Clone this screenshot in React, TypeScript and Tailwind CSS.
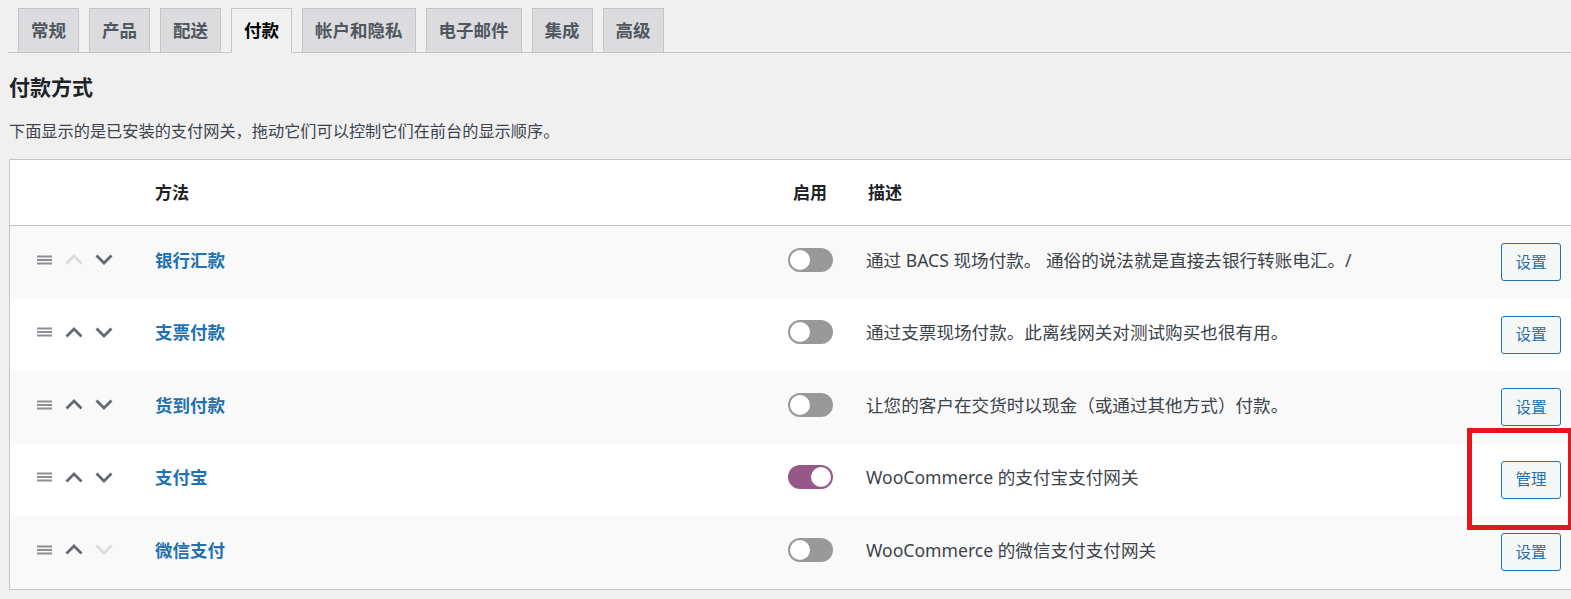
import React from 'react';

type Gateway = {
  name: string;
  desc: string;
  enabled: boolean;
  action: string;
  upDisabled?: boolean;
  downDisabled?: boolean;
};

const tabs = ['常规', '产品', '配送', '付款', '帐户和隐私', '电子邮件', '集成', '高级'];

const gateways: Gateway[] = [
  { name: '银行汇款', desc: '通过 BACS 现场付款。 通俗的说法就是直接去银行转账电汇。/', enabled: false, action: '设置', upDisabled: true },
  { name: '支票付款', desc: '通过支票现场付款。此离线网关对测试购买也很有用。', enabled: false, action: '设置' },
  { name: '货到付款', desc: '让您的客户在交货时以现金（或通过其他方式）付款。', enabled: false, action: '设置' },
  { name: '支付宝', desc: 'WooCommerce 的支付宝支付网关', enabled: true, action: '管理' },
  { name: '微信支付', desc: 'WooCommerce 的微信支付支付网关', enabled: false, action: '设置', downDisabled: true },
];

const Handle = () => (
  <svg width="15" height="10" viewBox="0 0 15 10" className="text-[#8c8f94]">
    <rect x="0" y="0.5" width="15" height="2" fill="currentColor" />
    <rect x="0" y="4" width="15" height="2" fill="currentColor" />
    <rect x="0" y="7.5" width="15" height="2" fill="currentColor" />
  </svg>
);

const Chevron = ({ up, disabled }: { up?: boolean; disabled?: boolean }) => (
  <svg
    width="18"
    height="11"
    viewBox="0 0 18 11"
    className={disabled ? 'text-[#dcdcde]' : 'text-[#646970]'}
  >
    <polyline
      points={up ? '1.5,9.5 9,2 16.5,9.5' : '1.5,1.5 9,9 16.5,1.5'}
      fill="none"
      stroke="currentColor"
      strokeWidth="2.8"
    />
  </svg>
);

const Toggle = ({ on }: { on: boolean }) => (
  <div
    className={`w-[45px] h-[24px] rounded-full flex items-center px-[2px] ${
      on ? 'bg-[#96588a] justify-end' : 'bg-[#999999] justify-start'
    }`}
  >
    <div className="w-[20px] h-[20px] rounded-full bg-white" />
  </div>
);

export default function App() {
  return (
    <div className="relative w-full min-h-[599px] bg-[#f0f0f1] overflow-hidden font-['Noto_Sans','Noto_Sans_CJK_SC',sans-serif] text-[#3c434a]">
      {/* Tabs */}
      <nav className="ml-[8px] pt-[8px] pl-[10px] flex gap-[10px] border-b border-[#c3c4c7]">
        {tabs.map((t) => {
          const active = t === '付款';
          return (
            <div
              key={t}
              className={`h-[45px] -mb-px px-[12px] flex items-center border border-[#c3c4c7] text-[17.5px] font-bold ${
                active
                  ? 'bg-[#f0f0f1] border-b-[#f0f0f1] text-[#000]'
                  : 'bg-[#dcdcde] text-[#50575e]'
              }`}
            >
              {t}
            </div>
          );
        })}
      </nav>

      <div className="pl-[9px]">
        <h2 className="mt-[21px] text-[21px] leading-[27px] font-bold text-[#1d2327]">付款方式</h2>
        <p className="mt-[18px] text-[16.2px] leading-[24px] text-[#3c434a]">
          下面显示的是已安装的支付网关，拖动它们可以控制它们在前台的显示顺序。
        </p>

        {/* Gateway table */}
        <div className="mt-[16px] bg-white border-l border-t border-b border-[#c3c4c7]">
          <div className="h-[66px] grid grid-cols-[145px_633px_78px_1fr_auto] items-center border-b border-[#c3c4c7] text-[17px] font-bold text-[#1d2327]">
            <div />
            <div>方法</div>
            <div className="pl-[5px]">启用</div>
            <div className="pl-[2px]">描述</div>
            <div />
          </div>

          {gateways.map((g, i) => (
            <div
              key={g.name}
              className={`h-[72.5px] grid grid-cols-[145px_633px_78px_1fr_auto] items-center ${
                i % 2 === 0 ? 'bg-[#f9f9f9]' : 'bg-white'
              }`}
            >
              <div className="flex items-center pl-[27px] pb-[5px]">
                <Handle />
                <span className="ml-[13px]">
                  <Chevron up disabled={g.upDisabled} />
                </span>
                <span className="ml-[12px]">
                  <Chevron disabled={g.downDisabled} />
                </span>
              </div>
              <div className="pb-[5px] text-[17.5px] font-bold text-[#2271b1]">{g.name}</div>
              <div className="pb-[5px]">
                <Toggle on={g.enabled} />
              </div>
              <div className="pb-[5px] text-[17.6px] text-[#3c434a]">{g.desc}</div>
              <div className="pr-[10px]">
                <button className="w-[60px] h-[38px] rounded-[3px] border border-[#2271b1] bg-[#f6f7f7] text-[15.6px] text-[#2271b1] flex items-center justify-center">
                  {g.action}
                </button>
              </div>
            </div>
          ))}
        </div>
      </div>

      {/* Annotation highlight */}
      <div className="absolute left-[1467px] top-[428px] w-[106px] h-[102px] border-[5px] border-[#e8141b]" />
    </div>
  );
}
